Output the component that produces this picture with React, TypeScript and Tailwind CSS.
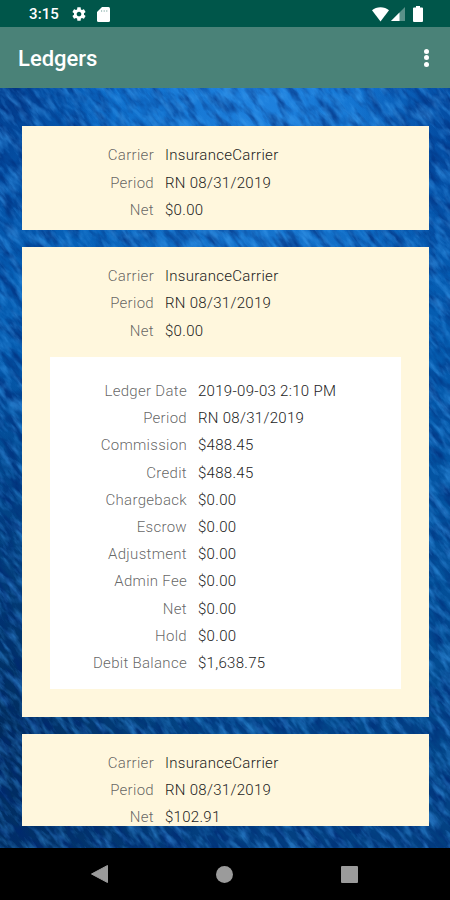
import React from 'react';

interface Field {
  label: string;
  value: string;
}

interface Ledger {
  id: number;
  summary: Field[];
  details?: Field[];
}

const summaryOf = (net: string): Field[] => [
  { label: 'Carrier', value: 'InsuranceCarrier' },
  { label: 'Period', value: 'RN 08/31/2019' },
  { label: 'Net', value: net },
];

const ledgers: Ledger[] = [
  { id: 1, summary: summaryOf('$0.00') },
  {
    id: 2,
    summary: summaryOf('$0.00'),
    details: [
      { label: 'Ledger Date', value: '2019-09-03 2:10 PM' },
      { label: 'Period', value: 'RN 08/31/2019' },
      { label: 'Commission', value: '$488.45' },
      { label: 'Credit', value: '$488.45' },
      { label: 'Chargeback', value: '$0.00' },
      { label: 'Escrow', value: '$0.00' },
      { label: 'Adjustment', value: '$0.00' },
      { label: 'Admin Fee', value: '$0.00' },
      { label: 'Net', value: '$0.00' },
      { label: 'Hold', value: '$0.00' },
      { label: 'Debit Balance', value: '$1,638.75' },
    ],
  },
  { id: 3, summary: summaryOf('$102.91') },
];

const FieldRow: React.FC<{ field: Field; labelClass: string }> = ({ field, labelClass }) => (
  <div className="flex h-[27.2px] items-center gap-[11px] text-[15px] font-light tracking-[0.3px] whitespace-nowrap">
    <span className={`${labelClass} text-right text-[#555]/90`}>{field.label}</span>
    <span className="text-[#1c1c1c]">{field.value}</span>
  </div>
);

const LedgerCard: React.FC<{ ledger: Ledger }> = ({ ledger }) => (
  <div className={`shrink-0 bg-[#fff7dd] pt-[16px] ${ledger.details ? 'pb-7' : 'pb-[6.4px]'}`}>
    {ledger.summary.map((f) => (
      <FieldRow key={f.label} field={f} labelClass="w-[132px]" />
    ))}
    {ledger.details && (
      <div className="mx-7 mt-[12.4px] bg-white pt-[20.8px] pb-[12px]">
        {ledger.details.map((f) => (
          <FieldRow key={f.label} field={f} labelClass="w-[137px]" />
        ))}
      </div>
    )}
  </div>
);

// Sea surface: lit from the top, darker towards the lower left, with diagonal ripples
const Ocean = () => (
  <svg className="absolute inset-0 h-full w-full" viewBox="0 0 450 760" preserveAspectRatio="none">
    <defs>
      <linearGradient id="depth" x1="0" y1="0" x2="0" y2="1">
        <stop offset="0" stopColor="#0868c4" />
        <stop offset="0.45" stopColor="#0456a6" />
        <stop offset="0.8" stopColor="#034a8e" />
        <stop offset="1" stopColor="#033f80" />
      </linearGradient>
      <radialGradient id="glow" cx="0.58" cy="0.02" r="0.45">
        <stop offset="0" stopColor="#2f93f0" stopOpacity="0.6" />
        <stop offset="1" stopColor="#2f93f0" stopOpacity="0" />
      </radialGradient>
      <radialGradient id="shade" cx="0" cy="0.85" r="0.5">
        <stop offset="0" stopColor="#00224e" stopOpacity="0.75" />
        <stop offset="1" stopColor="#00224e" stopOpacity="0" />
      </radialGradient>
      <radialGradient id="corner" cx="0" cy="0" r="0.25">
        <stop offset="0" stopColor="#00307c" stopOpacity="0.75" />
        <stop offset="1" stopColor="#00307c" stopOpacity="0" />
      </radialGradient>
      <radialGradient id="cornerRight" cx="1" cy="0.06" r="0.22">
        <stop offset="0" stopColor="#003a8c" stopOpacity="0.65" />
        <stop offset="1" stopColor="#003a8c" stopOpacity="0" />
      </radialGradient>
      <filter id="crests" x="0" y="0" width="1" height="1" colorInterpolationFilters="sRGB">
        <feTurbulence type="fractalNoise" baseFrequency="0.05 0.16" numOctaves="4" seed="4" />
        <feColorMatrix values="0 0 0 0 0.25  0 0 0 0 0.63  0 0 0 0 0.95  2.6 0 0 0 -1.1" />
      </filter>
      <filter id="troughs" x="0" y="0" width="1" height="1" colorInterpolationFilters="sRGB">
        <feTurbulence type="fractalNoise" baseFrequency="0.04 0.12" numOctaves="4" seed="19" />
        <feColorMatrix values="0 0 0 0 0  0 0 0 0 0.15  0 0 0 0 0.45  2.6 0 0 0 -1.05" />
      </filter>
    </defs>
    <rect width="450" height="760" fill="url(#depth)" />
    <rect width="450" height="760" fill="url(#glow)" />
    <rect width="450" height="760" fill="url(#shade)" />
    <rect width="450" height="760" fill="url(#corner)" />
    <rect width="450" height="760" fill="url(#cornerRight)" />
    <g transform="rotate(52 225 380)">
      <rect x="-300" y="-150" width="1050" height="1060" filter="url(#troughs)" opacity="0.6" />
      <rect x="-300" y="-150" width="1050" height="1060" filter="url(#crests)" opacity="0.5" />
    </g>
  </svg>
);

const StatusBar = () => (
  <div className="flex h-[27px] shrink-0 items-center bg-[#00564a] pl-[29px] pr-[27px] pt-px text-white">
    <span className="w-[31px] pt-px text-[15px] leading-none font-medium tracking-[0.1px]">3:15</span>
    <svg className="ml-[11px] h-4 w-4" viewBox="0 0 24 24" fill="currentColor">
      <path d="M19.43 12.98c.04-.32.07-.64.07-.98s-.03-.66-.07-.98l2.11-1.65c.19-.15.24-.42.12-.64l-2-3.46c-.12-.22-.39-.3-.61-.22l-2.49 1c-.52-.4-1.08-.73-1.69-.98l-.38-2.65C14.46 2.18 14.25 2 14 2h-4c-.25 0-.46.18-.49.42l-.38 2.65c-.61.25-1.17.59-1.69.98l-2.49-1c-.23-.09-.49 0-.61.22l-2 3.46c-.13.22-.07.49.12.64l2.11 1.65c-.04.32-.07.65-.07.98s.03.66.07.98l-2.11 1.65c-.19.15-.24.42-.12.64l2 3.46c.12.22.39.3.61.22l2.49-1c.52.4 1.08.73 1.69.98l.38 2.65c.03.24.24.42.49.42h4c.25 0 .46-.18.49-.42l.38-2.65c.61-.25 1.17-.59 1.69-.98l2.49 1c.23.09.49 0 .61-.22l2-3.46c.12-.22.07-.49-.12-.64l-2.11-1.65zM12 15.5c-1.93 0-3.5-1.57-3.5-3.5s1.57-3.5 3.5-3.5 3.5 1.57 3.5 3.5-1.57 3.5-3.5 3.5z" />
    </svg>
    <svg className="ml-[10px] h-[15px] w-[13px]" viewBox="0 0 13 15" fill="currentColor">
      <path d="M5 0h6.5A1.5 1.5 0 0 1 13 1.5v12a1.5 1.5 0 0 1-1.5 1.5h-10A1.5 1.5 0 0 1 0 13.5V5z" />
      <path d="M4.6 3v2M7.2 3v2M9.8 3v2" stroke="#9fc0ba" strokeWidth="0.9" />
    </svg>
    <svg className="ml-auto h-[15px] w-[17px]" viewBox="0 0 17 15" fill="currentColor">
      <path d="M0 3.2C2.3 1.3 5.2.2 8.5.2s6.2 1.1 8.5 3L8.5 14.5z" />
    </svg>
    <svg className="ml-[2px] h-[14px] w-[14px]" viewBox="0 0 14 14">
      <path d="M14 0v14H0z" fill="#fff" opacity="0.35" />
      <path d="M8.5 5.5V14H0z" fill="#fff" />
    </svg>
    <svg className="ml-[8px] h-4 w-[10px]" viewBox="0 0 10 16" fill="currentColor">
      <path d="M3 0h4v1.6h2a1 1 0 0 1 1 1V15a1 1 0 0 1-1 1H1a1 1 0 0 1-1-1V2.6a1 1 0 0 1 1-1h2z" />
    </svg>
  </div>
);

const NavBar = () => (
  <div className="flex h-[52px] shrink-0 items-center justify-between bg-black pl-[91px] pr-[92px]">
    <svg className="h-[18px] w-[17px]" viewBox="0 0 17 18" fill="#9b9b9b">
      <path d="M16.5.5v17L.5 9z" stroke="#9b9b9b" strokeLinejoin="round" />
    </svg>
    <div className="h-[17px] w-[17px] rounded-full bg-[#9b9b9b]" />
    <div className="h-[17px] w-[17px] rounded-[1px] bg-[#9b9b9b]" />
  </div>
);

const App: React.FC = () => {
  return (
    <div className="flex h-[900px] w-[450px] flex-col overflow-hidden font-['Roboto',sans-serif]">
      <StatusBar />
      <header className="flex h-[61px] shrink-0 items-center justify-between bg-[#4a8278] pl-[18px] pr-[21px]">
        <h1 className="pt-px text-[22px] font-medium text-white">Ledgers</h1>
        <div className="flex flex-col gap-[1.5px]">
          <span className="h-[5px] w-[5px] rounded-full bg-white" />
          <span className="h-[5px] w-[5px] rounded-full bg-white" />
          <span className="h-[5px] w-[5px] rounded-full bg-white" />
        </div>
      </header>
      <main className="relative min-h-0 flex-1 overflow-hidden bg-[#0456a6]">
        <Ocean />
        <div className="relative mt-[38px] mr-[21px] ml-[22px] flex h-[700px] flex-col gap-[17px] overflow-hidden">
          {ledgers.map((ledger) => (
            <LedgerCard key={ledger.id} ledger={ledger} />
          ))}
        </div>
      </main>
      <NavBar />
    </div>
  );
};

export default App;
